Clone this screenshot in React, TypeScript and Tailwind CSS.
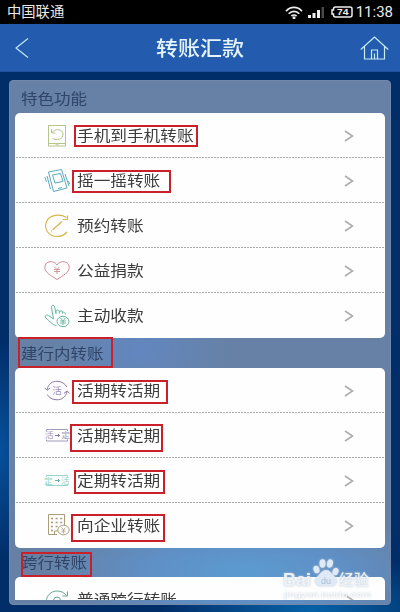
import React from "react"

const FONT = "font-['Noto_Sans_CJK_SC','Liberation_Sans',sans-serif]"

const ICONS: Record<string, React.ReactNode> = {
  phone: (
    <g stroke="#b4c68c">
      <rect x="4.500" y="2.500" width="17" height="20.500" />
      <path d="M4.500 20.500h17M11.500 21.800h3M7.500 6v4h4M8 9.500c2.500-4 10.500-4 11 1.500c0 6-6.500 6.500-10.500 4.500" />
    </g>
  ),
  shake: (
    <g stroke="#5fa9bd">
      <path d="M4.500 4L17.500 1.500l5.500 18.500L9.500 23.500zM8.500 7l8-1.500 2.500 8-8 1.500zM14 20.500l4-1M3 8l3.500 13M.8 9l1.700 5M21 6l4 12M24.500 13l1 3" />
    </g>
  ),
  schedule: (
    <g stroke="#d9b64a" strokeWidth="1.200">
      <path d="M22.500 4.500C16 .5 6 1.500 2.800 8C-1 16 5 23.500 13 23.500c4 0 7.500-1.500 10-4.500M18.500 6.500h5v-4M8.500 17L18 8.500M7 18.300l.7-.6" />
    </g>
  ),
  heart: (
    <g stroke="#cf8b91">
      <path d="M13 21.500C7 17.500 .8 14.500 .8 9.500C.8 2.500 10 2 13 7C16 2 25.200 2.500 25.200 9.500C25.200 14.500 19 17.500 13 21.500z" />
      <path d="M10.500 9l2.500 2.500 2.500-2.500M10 11.500h6M10 13.500h6M13 11.500v4.500" strokeWidth=".9" />
    </g>
  ),
  hand: (
    <g stroke="#62b89d">
      <path d="M12.500 22.500C8.500 22 6 18.500 1.500 14.500C.5 12.500 2.500 11.500 4.500 12.500l5 3.500L7.500 4.500c-.5-2.500 2.500-3 3-1L12 10.500V8.500c0-2 3-2 3.300 0v2M15.300 9c.5-1.500 3-1.500 3.200 0v1.500M18.500 9.500c1.500-1 3 0 3 2" />
      <ellipse cx="19" cy="18.500" rx="6" ry="5.200" />
      <path d="M16.500 15l2.500 3 2.500-3M16 18h6M16 20h6M19 18v4" strokeWidth=".9" />
    </g>
  ),
  cycle: (
    <>
      <g stroke="#8e7ba8">
        <path d="M3 11.500C4.500 5.500 8.500 3.300 13 3.300s8 2.200 9.800 5.700M23.200 13.500C21.500 19.500 17.500 21.800 13 21.800s-8-2.200-9.800-5.300M.8 10l2.200 2.300 3.200-2.300M20 15.300l3.200-2.300 2.300 2.300" />
      </g>
      <text x="8.300" y="16" fontSize="9.500" fill="#9c90b5">活</text>
    </>
  ),
  toFixed: (
    <>
      <path d="M2.500 8V6.500h21V8M2.500 16.500V18h21v-1.500" stroke="#a09bb9" />
      <text x="1" y="15.300" fontSize="8.500" fill="#9b94b7">活</text>
      <path d="M11 12.500h4.500M14 11l1.500 1.500-1.500 1.500" stroke="#81799f" />
      <text x="17.500" y="15.300" fontSize="8.500" fill="#9b94b7">定</text>
    </>
  ),
  toCurrent: (
    <>
      <path d="M2.500 9V7.500h21V9M2.500 16V17.500h21V16" stroke="#94d7ca" />
      <text x="0" y="15.500" fontSize="8.500" fill="#8bd3c5">定</text>
      <path d="M11 12.500h4.500M14 11l1.500 1.500-1.500 1.500" stroke="#60b4a4" />
      <text x="17" y="15.500" fontSize="8.500" fill="#8bd3c5">活</text>
    </>
  ),
  company: (
    <g stroke="#ab9b78">
      <path d="M13 21.500H4.500V1.500h16v11M10.500 21v-3h3" />
      <path d="M7 5.500h11.500M7 9.500h11.500M7 13.500h8M7 17.500h2" strokeWidth="1.600" strokeDasharray="2 2.600" />
      <ellipse cx="19.500" cy="17" rx="5.700" ry="4.800" fill="#fefefe" />
      <path d="M17.500 14.500l2 2 2-2M17.500 17h4M17.500 18.800h4M19.500 16.500v4" strokeWidth=".7" />
    </g>
  ),
  cross: (
    <g stroke="#64a98e">
      <path d="M2 15C2.500 8.500 7 4 13 4c4 0 7.500 1.700 9.800 4.800M18.500 9h5V4.500" />
      <circle cx="13" cy="13.500" r="3.500" />
    </g>
  ),
}

type Row = { icon: string; label: string; mark?: string }

const FEATURES: Row[] = [
  { icon: "phone", label: "手机到手机转账", mark: "left-[59px] top-[12px] w-[124px] h-[22px]" },
  { icon: "shake", label: "摇一摇转账", mark: "left-[57px] top-[12px] w-[99px] h-[23px]" },
  { icon: "schedule", label: "预约转账" },
  { icon: "heart", label: "公益捐款" },
  { icon: "hand", label: "主动收款" },
]

const INTERNAL: Row[] = [
  { icon: "cycle", label: "活期转活期", mark: "left-[57px] top-[12px] w-[96px] h-[24px]" },
  { icon: "toFixed", label: "活期转定期", mark: "left-[55px] top-[11px] w-[93px] h-[28px]" },
  { icon: "toCurrent", label: "定期转活期", mark: "left-[59px] top-[12px] w-[91px] h-[24px]" },
  { icon: "company", label: "向企业转账", mark: "left-[56px] top-[11px] w-[94px] h-[28px]" },
]

const CROSS: Row[] = [{ icon: "cross", label: "普通跨行转账" }]

function Mark({ className }: { className: string }) {
  return <span className={`absolute border-2 border-[#c9202a] ${className}`} />
}

function RowItem({ row, last }: { row: Row; last: boolean }) {
  return (
    <div className="relative flex h-[45px] shrink-0 items-center pl-[29px] pr-[31px]">
      <svg width="26" height="26" viewBox="0 0 26 26" fill="none" className="shrink-0">
        {ICONS[row.icon]}
      </svg>
      <span className="mb-[2px] ml-[7px] origin-left scale-x-[1.11] whitespace-nowrap text-[15px] leading-[20px] text-[#3c3c3c]">
        {row.label}
      </span>
      <svg width="10" height="12" viewBox="0 0 10 12" fill="none" className="ml-auto">
        <path d="M1 1l7.500 5L1 11" stroke="#adadad" strokeWidth="1.600" />
      </svg>
      {!last && (
        <svg width="368" height="1" className="absolute bottom-0 left-px">
          <path d="M0 .5h368" stroke="#a8a8a8" strokeDasharray="2 1" />
        </svg>
      )}
      {row.mark && <Mark className={row.mark} />}
    </div>
  )
}

function Card({ rows, className = "" }: { rows: Row[]; className?: string }) {
  return (
    <div className={`flex flex-col bg-[#fefefe] ${className}`}>
      {rows.map((row, i) => (
        <RowItem key={row.label} row={row} last={i === rows.length - 1} />
      ))}
    </div>
  )
}

function SectionTitle({ children, className }: { children: React.ReactNode; className: string }) {
  return (
    <div className={`relative flex shrink-0 items-center pl-[6px] text-[15px] text-[#2f4467] ${className}`}>
      {children}
    </div>
  )
}

function Watermark() {
  return (
    <div className="absolute left-[283px] top-[558px] h-[42px] w-[90px]">
      <svg width="90" height="42" viewBox="0 0 90 42" className="[filter:drop-shadow(0_0_1px_#b9c6d6)]">
        <g fill="#dfeaf6">
          <ellipse cx="33.500" cy="11.500" rx="3" ry="3.800" transform="rotate(-15 33.500 11.500)" />
          <ellipse cx="39.500" cy="5.500" rx="3" ry="4.200" />
          <ellipse cx="47" cy="5.500" rx="3" ry="4.200" transform="rotate(12 47 5.500)" />
          <ellipse cx="52.500" cy="13.500" rx="3" ry="3.800" transform="rotate(20 52.500 13.500)" />
          <path d="M43 12c4 0 5.500 3.500 8.500 6.500c4 4 2 9.500-3 9.500c-3 0-8-.5-11 0c-5 0-7-5.500-3.500-9c3-3 5-7 9-7z" />
        </g>
        <g fill="#edf2f8">
          <text x="0" y="28" fontSize="19" fontWeight="700" textLength="28" lengthAdjust="spacingAndGlyphs" fontFamily="Liberation Sans">
            Bai
          </text>
          <text x="56" y="27" fontSize="15" fontWeight="500">经验</text>
        </g>
        <text x="38" y="26" fontSize="9" fill="#a9bdd4" fontFamily="Liberation Sans">du</text>
        <text x="1" y="39" fontSize="8" textLength="87" lengthAdjust="spacingAndGlyphs" fill="#fafafa" fontFamily="Liberation Sans">
          jingyan.baidu.com
        </text>
      </svg>
    </div>
  )
}

export default function App() {
  return (
    <div
      className={`relative flex h-[612px] w-[400px] flex-col overflow-hidden bg-[#012e69] bg-[radial-gradient(ellipse_40px_110px_at_0px_450px,#07509a_0px,transparent_100%),radial-gradient(ellipse_150px_60px_at_310px_612px,#0763a8_0px,transparent_100%)] ${FONT}`}
    >
      <div className="flex h-6 shrink-0 items-center bg-black pl-[7px] pr-[7px] text-[#eaeaea]">
        <span className="mb-[2px] text-[14.3px] leading-[22px]">中国联通</span>
        <svg width="18" height="13" viewBox="0 0 18 13" fill="none" stroke="#eee" strokeWidth="1.700" className="ml-auto">
          <path d="M1 5.200c4.500-5 11.500-5 16 0M3.700 7.800c3-3.300 7.600-3.300 10.600 0M6.400 10.200c1.500-1.600 3.700-1.600 5.200 0" />
          <circle cx="9" cy="11.700" r=".7" />
        </svg>
        <svg width="17" height="11" viewBox="0 0 17 11" className="ml-[5px]" fill="#eee">
          <path d="M0 8h3v3H0zM4.500 6h3v5h-3zM9 3h3v8H9z" />
          <path d="M13.500 0h2.500v11h-2.500z" fill="#484848" />
        </svg>
        <svg width="22" height="12" viewBox="0 0 22 12" className="ml-[6px]" fill="none">
          <path d="M4.500 1h14.500q2 0 2 2v6q0 2-2 2H4.500q-2 0-2-2V8H1V4h1.500V3q0-2 2-2z" stroke="#eee" strokeWidth="1.500" />
          <text x="6" y="9.300" fontSize="9.500" fontWeight="700" fill="#eee" fontFamily="Liberation Sans" textLength="11.500" lengthAdjust="spacingAndGlyphs">
            74
          </text>
        </svg>
        <span className="ml-[3px] pt-px font-['Roboto',sans-serif] text-[15px] leading-[23px]">11:38</span>
      </div>

      <div className="flex h-12 shrink-0 items-center justify-between border-b border-[#2051a0] bg-[#235bae] pl-[15px] pr-[11px]">
        <svg width="14" height="20" viewBox="0 0 14 20" fill="none" stroke="#c6e8f5" strokeWidth="1.200">
          <path d="M13 .5L1 10l12 9.500" />
        </svg>
        <h1 className="ml-[11px] scale-x-[1.1] text-[20px] font-medium leading-[48px] text-[#e5f5fb]">转账汇款</h1>
        <svg width="29" height="24" viewBox="0 0 29 24" fill="none" stroke="#c6ecf4" strokeWidth="1.200">
          <path d="M.8 13.500L14.500 1l13.700 12.500M4.500 10.500v12.500h20V10.500M11.500 23v-9h6v9M14.500 17.500v5" />
        </svg>
      </div>

      <div className="ml-[9px] mt-2 flex h-[525px] w-[382px] shrink-0 flex-col rounded-[4px] border border-[#7188aa] bg-[#6681a5] bg-[radial-gradient(ellipse_200px_60px_at_235px_490px,#5b9bd0_0px,#5f8fc5_50%,transparent_100%),radial-gradient(ellipse_90px_60px_at_130px_270px,#6287c0_0px,transparent_100%)] px-[5px] pb-[4px]">
        <SectionTitle className="h-8 pt-[3px]">
          <span className="origin-left scale-x-[1.1]">特色功能</span>
        </SectionTitle>
        <Card rows={FEATURES} className="rounded-[5px]" />
        <SectionTitle className="h-[30px]">
          <span className="origin-left scale-x-[1.1]">建行内转账</span>
          <Mark className="left-[3px] top-[-1px] h-[31px] w-[95px]" />
        </SectionTitle>
        <Card rows={INTERNAL} className="rounded-[5px]" />
        <SectionTitle className="h-[29px]">
          <span className="origin-left scale-x-[1.1]">跨行转账</span>
          <Mark className="left-[6px] top-[4px] h-[25px] w-[71px]" />
        </SectionTitle>
        <Card rows={CROSS} className="h-[23px] shrink-0 overflow-hidden rounded-t-[5px]" />
      </div>

      <Watermark />
    </div>
  )
}
